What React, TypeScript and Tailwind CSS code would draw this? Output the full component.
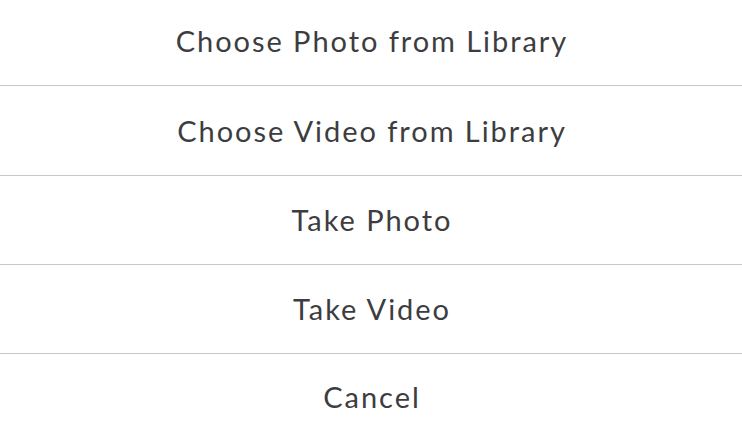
import React from 'react'

const options = [
  { label: 'Choose Photo from Library', h: 'h-[85px] pb-[3px]' },
  { label: 'Choose Video from Library', h: 'h-[90px] border-t' },
  { label: 'Take Photo', h: 'h-[89px] border-t' },
  { label: 'Take Video', h: 'h-[89px] border-t' },
  { label: 'Cancel', h: 'h-[87px] border-t' },
]

export default function App() {
  return (
    <div className="flex h-[440px] w-[742px] flex-col overflow-hidden bg-white font-['Lato',sans-serif]">
      {options.map((o) => (
        <button
          key={o.label}
          className={`flex w-full shrink-0 items-center justify-center border-[#c8c8c8] pl-[2px] text-[29px] tracking-[1.95px] text-[#3d3d3f] ${o.h}`}
        >
          {o.label}
        </button>
      ))}
    </div>
  )
}
